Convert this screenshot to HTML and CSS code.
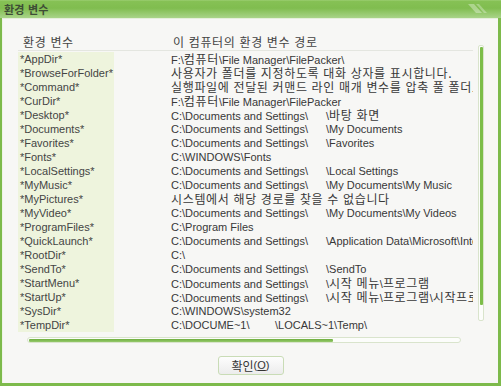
FILE: index.html
```
<!DOCTYPE html>
<html lang="ko">
<head>
<meta charset="utf-8">
<title>환경 변수</title>
<link rel="stylesheet" href="styles.css">
</head>
<body>
<div class="window">
  <div class="titlebar">
    <span class="title">환경 변수</span>
    <svg class="deco" width="26" height="18" viewBox="0 0 26 18">
      <path d="M2 4 L8 4 L16 13 L10 13 Z" fill="rgba(255,255,255,0.35)"/>
      <path d="M10 4 L13 4 L21 13 L18 13 Z" fill="rgba(255,255,255,0.3)"/>
    </svg>
  </div>
  <div class="client">
    <div class="list">
      <div class="table">
        <div class="head">
          <div class="hname ko">환경 변수</div>
          <div class="hval ko">이 컴퓨터의 환경 변수 경로</div>
        </div>
        <div class="row"><div class="name">*AppDir*</div><div class="val">F:\<span class="ko">컴퓨터</span>\File Manager\FilePacker\</div></div>
        <div class="row"><div class="name">*BrowseForFolder*</div><div class="val ko">사용자가 폴더를 지정하도록 대화 상자를 표시합니다.</div></div>
        <div class="row"><div class="name">*Command*</div><div class="val ko">실행파일에 전달된 커맨드 라인 매개 변수를 압축 풀 폴더로 지정합니다.</div></div>
        <div class="row"><div class="name">*CurDir*</div><div class="val">F:\<span class="ko">컴퓨터</span>\File Manager\FilePacker</div></div>
        <div class="row"><div class="name">*Desktop*</div><div class="val"><span class="seg">C:\Documents and Settings\</span>\<span class="ko">바탕 화면</span></div></div>
        <div class="row"><div class="name">*Documents*</div><div class="val"><span class="seg">C:\Documents and Settings\</span>\My Documents</div></div>
        <div class="row"><div class="name">*Favorites*</div><div class="val"><span class="seg">C:\Documents and Settings\</span>\Favorites</div></div>
        <div class="row"><div class="name">*Fonts*</div><div class="val">C:\WINDOWS\Fonts</div></div>
        <div class="row"><div class="name">*LocalSettings*</div><div class="val"><span class="seg">C:\Documents and Settings\</span>\Local Settings</div></div>
        <div class="row"><div class="name">*MyMusic*</div><div class="val"><span class="seg">C:\Documents and Settings\</span>\My Documents\My Music</div></div>
        <div class="row"><div class="name">*MyPictures*</div><div class="val ko">시스템에서 해당 경로를 찾을 수 없습니다</div></div>
        <div class="row"><div class="name">*MyVideo*</div><div class="val"><span class="seg">C:\Documents and Settings\</span>\My Documents\My Videos</div></div>
        <div class="row"><div class="name">*ProgramFiles*</div><div class="val">C:\Program Files</div></div>
        <div class="row"><div class="name">*QuickLaunch*</div><div class="val"><span class="seg">C:\Documents and Settings\</span>\Application Data\Microsoft\Internet Explorer\Quick Launch</div></div>
        <div class="row"><div class="name">*RootDir*</div><div class="val">C:\</div></div>
        <div class="row"><div class="name">*SendTo*</div><div class="val"><span class="seg">C:\Documents and Settings\</span>\SendTo</div></div>
        <div class="row"><div class="name">*StartMenu*</div><div class="val"><span class="seg">C:\Documents and Settings\</span>\<span class="ko">시작 메뉴</span>\<span class="ko">프로그램</span></div></div>
        <div class="row"><div class="name">*StartUp*</div><div class="val"><span class="seg">C:\Documents and Settings\</span>\<span class="ko">시작 메뉴</span>\<span class="ko">프로그램</span>\<span class="ko">시작프로그램</span></div></div>
        <div class="row"><div class="name">*SysDir*</div><div class="val">C:\WINDOWS\system32</div></div>
        <div class="row"><div class="name">*TempDir*</div><div class="val"><span class="seg short">C:\DOCUME~1\</span>\LOCALS~1\Temp\</div></div>
      </div>
      <div class="vscroll"><div class="vthumb"></div></div>
    </div>
    <div class="hscroll"><div class="hthumb"></div></div>
    <div class="btnrow">
      <button class="btn"><span class="ko">확인</span>(<u>O</u>)</button>
    </div>
  </div>
</div>
</body>
</html>
```
FILE: styles.css
```
html, body {
  margin: 0;
  padding: 0;
}
body {
  width: 501px;
  height: 386px;
  overflow: hidden;
  font-family: "Liberation Sans", "Noto Sans CJK KR", sans-serif;
  font-size: 11px;
  color: #333;
  background: #f7f7f5;
}
.ko {
  font-family: "Noto Sans CJK KR", "Liberation Sans", sans-serif;
  font-size: 12px;
  letter-spacing: 0.65px;
}
.window {
  width: 501px;
  height: 386px;
  box-sizing: border-box;
  display: flex;
  flex-direction: column;
  background: #7dba4b;
  padding: 0 3px 3px 2px;
}
.titlebar {
  height: 18px;
  flex: none;
  display: flex;
  align-items: center;
  justify-content: space-between;
  background: linear-gradient(#a2d27a 0, #86c155 1px, #80bd4f 45%, #a9d489 100%);
  margin: 0 -3px 0 -2px;
  padding-left: 4px;
}
.title {
  font-family: "Noto Sans CJK KR", sans-serif;
  font-size: 11px;
  font-weight: bold;
  color: #3e4d36;
  line-height: 18px;
  letter-spacing: 0.2px;
}
.deco {
  display: block;
  margin-right: 9px;
}
.client {
  flex: 1;
  background: #f7f7f5;
  border-top: 1px solid #e6efdc;
  border-left: 1px solid #eef4e6;
  display: flex;
  flex-direction: column;
}
.list {
  display: flex;
  align-items: flex-start;
  margin: 14px 0 0 15px;
}
.table {
  width: 455px;
}
.head {
  display: flex;
  height: 17px;
  line-height: 17px;
  border-bottom: 1px solid #e4e6e0;
  margin-bottom: 1px;
  color: #444;
}
.hname {
  width: 150px;
  padding-left: 5px;
}
.hval {
  flex: 1;
}
.row {
  display: flex;
  height: 14px;
  line-height: 14px;
}
.name {
  width: 94px;
  padding-left: 2px;
  background: #eef4dd;
  color: #444;
  white-space: nowrap;
}
.val {
  margin-left: 57px;
  width: 302px;
  white-space: nowrap;
  overflow: hidden;
  color: #383838;
}
.seg {
  display: inline-block;
  width: 155px;
}
.seg.short {
  width: 104px;
}
.vscroll {
  width: 4px;
  height: 272px;
  margin: 12px 0 0 5px;
  border: 1px solid #d9e4cc;
  border-radius: 2px;
  background: #fcfdfb;
  padding: 1px 0;
}
.vthumb {
  width: 3px;
  margin: 0 auto;
  height: 258px;
  background: #7cbd49;
  border-radius: 1px;
}
.hscroll {
  width: 430px;
  height: 4px;
  margin: 5px 0 0 24px;
  border: 1px solid #d9e4cc;
  border-radius: 3px;
  background: #fcfdfb;
  padding: 0 1px;
  display: flex;
  align-items: center;
}
.hthumb {
  width: 304px;
  height: 3px;
  background: linear-gradient(#6fae40, #96ca6c);
  border-radius: 1px;
}
.btnrow {
  display: flex;
  justify-content: center;
  margin-top: 13px;
}
.btn {
  width: 66px;
  height: 19px;
  padding: 0;
  border: 1px solid #c9dcb6;
  border-radius: 3px;
  background: linear-gradient(#fdfdfd, #ececec);
  font-family: "Liberation Sans", "Noto Sans CJK KR", sans-serif;
  font-size: 11px;
  color: #333;
  line-height: 17px;
  display: flex;
  align-items: center;
  justify-content: center;
}
.btn .ko {
  font-size: 12px;
  letter-spacing: 0;
}
```
